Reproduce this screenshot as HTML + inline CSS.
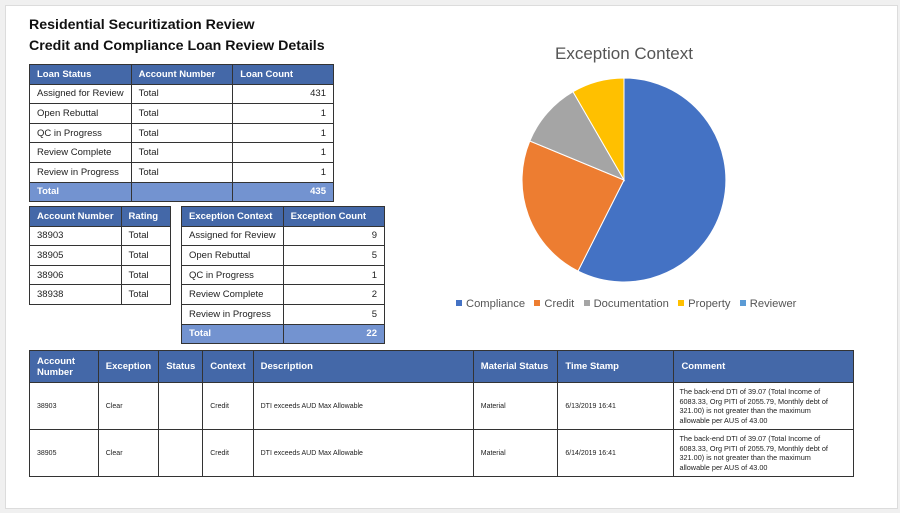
<!DOCTYPE html>
<html><head><style>
body{margin:0;width:900px;height:513px;background:#f0f0f0;font-family:"Liberation Sans",sans-serif;position:relative;overflow:hidden}
.card{position:absolute;left:5px;top:5px;width:891px;height:502px;background:#fff;border:1px solid #dcdcdc}
.t{position:absolute;border-collapse:collapse;font-size:9.5px;color:#222}
.t td{border:1px solid #333;padding:0 7px;height:18.6px;white-space:nowrap}
.t tr.h td{background:#4468a8;color:#fff;font-weight:bold}
.t tr.tot td{background:#7393d0;color:#fff;font-weight:bold}
.r{text-align:right}
h1{position:absolute;left:29px;top:15px;margin:0;font-size:14.2px;line-height:21px;font-weight:bold;color:#111}
.big{position:absolute;left:29px;top:350px;border-collapse:collapse;font-size:7px;color:#222}
.big td{border:1px solid #333;padding:0 7px;vertical-align:middle}
.big tr.h td{background:#4468a8;color:#fff;font-weight:bold;font-size:9.5px;height:31px}
.big tr.d td{height:46px}
.big td.c{line-height:9.5px;padding:0 18px 0 5px;font-size:7.3px}
.leg{position:absolute;top:298px;left:456px;font-size:11.2px;color:#555;white-space:nowrap}
.leg span{display:inline-block;width:6px;height:6px;margin:0 4px 0 0;vertical-align:1px}
</style></head><body>
<div class="card"></div>
<h1>Residential Securitization Review<br>Credit and Compliance Loan Review Details</h1>
<table class="t" style="left:29px;top:64px;width:305px">
<colgroup><col style="width:101px"><col style="width:102px"><col style="width:102px"></colgroup>
<tr class="h"><td>Loan Status</td><td>Account Number</td><td>Loan Count</td></tr>
<tr><td>Assigned for Review</td><td>Total</td><td class="r">431</td></tr>
<tr><td>Open Rebuttal</td><td>Total</td><td class="r">1</td></tr>
<tr><td>QC in Progress</td><td>Total</td><td class="r">1</td></tr>
<tr><td>Review Complete</td><td>Total</td><td class="r">1</td></tr>
<tr><td>Review in Progress</td><td>Total</td><td class="r">1</td></tr>
<tr class="tot"><td>Total</td><td></td><td class="r">435</td></tr>
</table>
<table class="t" style="left:29px;top:206px;width:142px">
<colgroup><col style="width:89px"><col style="width:53px"></colgroup>
<tr class="h"><td>Account Number</td><td>Rating</td></tr>
<tr><td>38903</td><td>Total</td></tr>
<tr><td>38905</td><td>Total</td></tr>
<tr><td>38906</td><td>Total</td></tr>
<tr><td>38938</td><td>Total</td></tr>
</table>
<table class="t" style="left:181px;top:206px;width:204px">
<colgroup><col style="width:101px"><col style="width:103px"></colgroup>
<tr class="h"><td>Exception Context</td><td>Exception Count</td></tr>
<tr><td>Assigned for Review</td><td class="r">9</td></tr>
<tr><td>Open Rebuttal</td><td class="r">5</td></tr>
<tr><td>QC in Progress</td><td class="r">1</td></tr>
<tr><td>Review Complete</td><td class="r">2</td></tr>
<tr><td>Review in Progress</td><td class="r">5</td></tr>
<tr class="tot"><td>Total</td><td class="r">22</td></tr>
</table>
<div style="position:absolute;left:524px;top:44px;width:200px;text-align:center;font-size:17px;color:#555">Exception Context</div>
<svg style="position:absolute;left:0;top:0" width="900" height="513">
<path d="M624 180 L624 78 A102 102 0 1 1 578 271.1 Z" fill="#4472c4" stroke="#fff" stroke-width="1"/>
<path d="M624 180 L578 271.1 A102 102 0 0 1 529.8 141 Z" fill="#ed7d31" stroke="#fff" stroke-width="1"/>
<path d="M624 180 L529.8 141 A102 102 0 0 1 573 91.7 Z" fill="#a5a5a5" stroke="#fff" stroke-width="1"/>
<path d="M624 180 L573 91.7 A102 102 0 0 1 624 78 Z" fill="#ffc000" stroke="#fff" stroke-width="1"/>
</svg>
<div class="leg"><span style="background:#4472c4"></span>Compliance&nbsp;&nbsp;&nbsp;<span style="background:#ed7d31"></span>Credit&nbsp;&nbsp;&nbsp;<span style="background:#a5a5a5"></span>Documentation&nbsp;&nbsp;&nbsp;<span style="background:#ffc000"></span>Property&nbsp;&nbsp;&nbsp;<span style="background:#5b9bd5"></span>Reviewer</div>
<table class="big" style="width:825px">
<colgroup><col style="width:69px"><col style="width:58px"><col style="width:43px"><col style="width:50px"><col style="width:222px"><col style="width:85px"><col style="width:117px"><col style="width:181px"></colgroup>
<tr class="h"><td>Account<br>Number</td><td>Exception</td><td>Status</td><td>Context</td><td>Description</td><td>Material Status</td><td>Time Stamp</td><td>Comment</td></tr>
<tr class="d"><td>38903</td><td>Clear</td><td></td><td>Credit</td><td>DTI exceeds AUD Max Allowable</td><td>Material</td><td>6/13/2019 16:41</td><td class="c">The back-end DTI of 39.07 (Total Income of 6083.33, Org PITI of 2055.79, Monthly debt of 321.00) is not greater than the maximum allowable per AUS of 43.00</td></tr>
<tr class="d"><td>38905</td><td>Clear</td><td></td><td>Credit</td><td>DTI exceeds AUD Max Allowable</td><td>Material</td><td>6/14/2019 16:41</td><td class="c">The back-end DTI of 39.07 (Total Income of 6083.33, Org PITI of 2055.79, Monthly debt of 321.00) is not greater than the maximum allowable per AUS of 43.00</td></tr>
</table>
</body></html>
